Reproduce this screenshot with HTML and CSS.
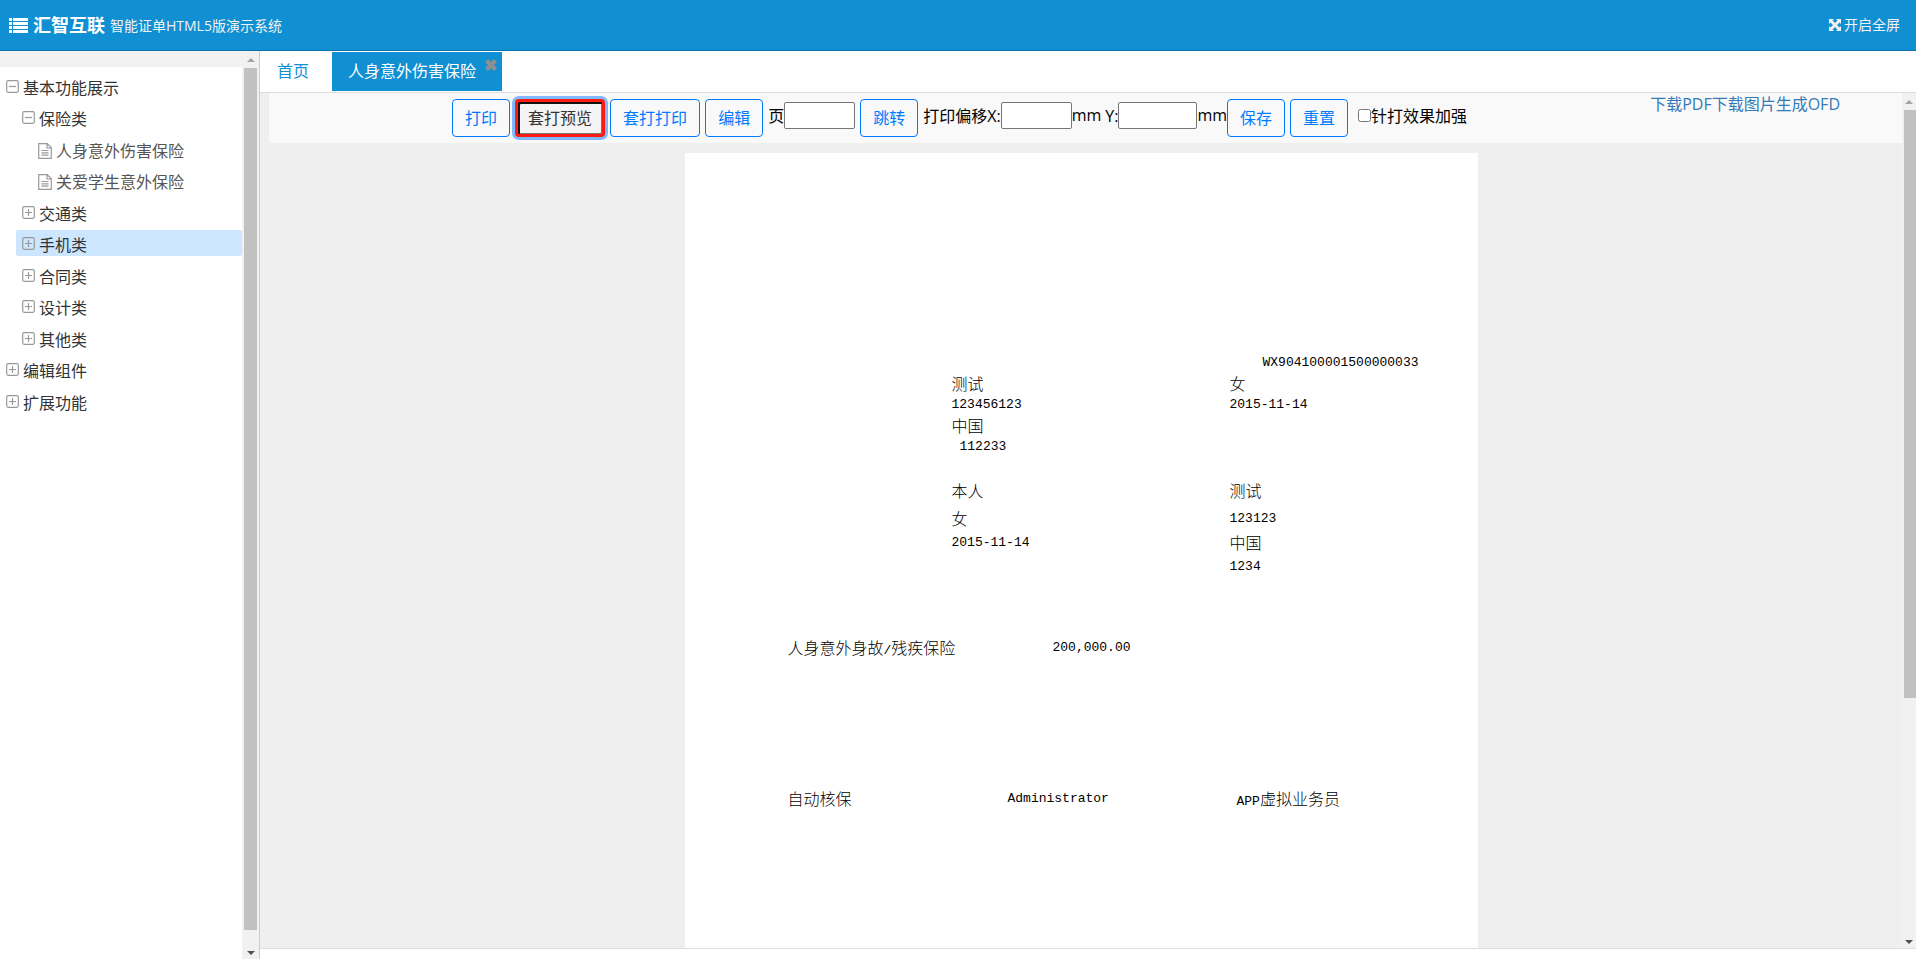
FILE: index.html
```html
<!DOCTYPE html>
<html lang="zh-CN">
<head>
<meta charset="utf-8">
<title>汇智互联 智能证单HTML5版演示系统</title>
<link rel="stylesheet" href="styles.css">
</head>
<body>
<svg class="defs" aria-hidden="true">
  <symbol id="minus" viewBox="0 0 13 13"><rect x=".7" y=".7" width="11.6" height="11.6" rx="1.5" fill="none" stroke="#999" stroke-width="1.2"/><path d="M3 6.5h7" stroke="#999" stroke-width="1.2"/></symbol>
  <symbol id="plus" viewBox="0 0 13 13"><rect x=".7" y=".7" width="11.6" height="11.6" rx="1.5" fill="none" stroke="#999" stroke-width="1.2"/><path d="M3 6.5h7M6.5 3v7" stroke="#999" stroke-width="1.2"/></symbol>
  <symbol id="doc" viewBox="0 0 14 16"><path d="M.7.7h8.5l4.1 4.1v10.5H.7zM9 .7V5h4.3M3.5 7.5h7M3.5 9.8h7M3.5 12.1h7" fill="none" stroke="#999" stroke-width="1.2"/></symbol>
</svg>
<header class="header">
  <div class="brand">
    <svg class="brand-icon" viewBox="0 0 19 15" aria-hidden="true"><path d="M0 0h3v3H0zM4 0h15v3H4zM0 4h3v3H0zM4 4h15v3H4zM0 8h3v3H0zM4 8h15v3H4zM0 12h3v3H0zM4 12h15v3H4z" fill="#fff"/></svg>
    <strong class="brand-name">汇智互联</strong>
    <span class="brand-sub">智能证单HTML5版演示系统</span>
  </div>
  <button class="fullscreen" type="button">
    <svg viewBox="0 0 12 12" width="12" height="12" aria-hidden="true"><path d="M0 0h5L3.500 1.500 6 4l2.500-2.500L7 0h5v5l-1.500-1.500L8 6l2.500 2.500L12 7v5H7l1.500-1.500L6 8l-2.500 2.500L5 12H0V7l1.500 1.500L4 6 1.500 3.500 0 5z" fill="#f2f2f2"/></svg>
    开启全屏
  </button>
</header>
<div class="body">
  <aside class="sidebar">
    <nav class="side-content">
      <div class="side-band"></div>
      <ul class="tree">
        <li class="node"><svg class="box"><use href="#minus"/></svg>基本功能展示</li>
        <li class="node level1"><svg class="box"><use href="#minus"/></svg>保险类</li>
        <li class="node level2"><svg class="doc"><use href="#doc"/></svg><a href="#">人身意外伤害保险</a></li>
        <li class="node level2"><svg class="doc"><use href="#doc"/></svg><a href="#">关爱学生意外保险</a></li>
        <li class="node level1"><svg class="box"><use href="#plus"/></svg>交通类</li>
        <li class="node level1 selected"><svg class="box"><use href="#plus"/></svg>手机类</li>
        <li class="node level1"><svg class="box"><use href="#plus"/></svg>合同类</li>
        <li class="node level1"><svg class="box"><use href="#plus"/></svg>设计类</li>
        <li class="node level1"><svg class="box"><use href="#plus"/></svg>其他类</li>
        <li class="node"><svg class="box"><use href="#plus"/></svg>编辑组件</li>
        <li class="node"><svg class="box"><use href="#plus"/></svg>扩展功能</li>
      </ul>
    </nav>
    <div class="scroll side-scroll">
      <span class="arrow up"></span>
      <div class="track"><div class="thumb"></div></div>
      <span class="arrow down"></span>
    </div>
  </aside>
  <main class="main">
    <nav class="tabs">
      <a class="tab" href="#">首页</a>
      <a class="tab active" href="#">人身意外伤害保险</a>
      <button class="tab-close" type="button" aria-label="关闭"><svg viewBox="0 0 12 12" width="12" height="12"><path d="M3 0l3 3 3-3 3 3-3 3 3 3-3 3-3-3-3 3-3-3 3-3-3-3z" fill="#8f8f8f"/></svg></button>
    </nav>
    <div class="workspace">
      <div class="view">
        <div class="toolbar">
          <form class="controls">
            <button class="btn" type="button">打印</button>
            <button class="btn focused" type="button">套打预览</button>
            <button class="btn" type="button">套打打印</button>
            <button class="btn" type="button">编辑</button>
            <label class="field">页<input type="text" class="num"></label>
            <button class="btn" type="button">跳转</button>
            <div class="offset">
              <label class="field">打印偏移X:<input type="text" class="num"></label>
              <span class="unit">mm</span>
              <label class="field second">Y:<input type="text" class="num wide"></label>
              <span class="unit">mm</span>
              <button class="btn" type="button">保存</button>
            </div>
            <button class="btn" type="button">重置</button>
            <label class="field check"><input type="checkbox" class="tick">针打效果加强</label>
          </form>
          <div class="links"><a href="#">下载PDF</a><a href="#">下载图片</a><a href="#">生成OFD</a></div>
        </div>
        <article class="paper">
          <div class="row number"><span class="code">WX904100001500000033</span></div>
          <div class="row person"><span>测试</span><span>女</span></div>
          <div class="row person"><span class="code">123456123</span><span class="code">2015-11-14</span></div>
          <div class="row person"><span>中国</span></div>
          <div class="row person"><span class="code inset">112233</span></div>
          <div class="row person insured"><span>本人</span><span>测试</span></div>
          <div class="row person loose"><span>女</span><span class="code">123123</span></div>
          <div class="row person loose"><span class="code">2015-11-14</span><span>中国</span></div>
          <div class="row person"><span></span><span class="code">1234</span></div>
          <div class="row cover"><span>人身意外身故<span class="code">/</span>残疾保险</span><span class="code">200,000.00</span></div>
          <div class="row staff"><span>自动核保</span><span class="code">Administrator</span><span><span class="code">APP</span>虚拟业务员</span></div>
        </article>
      </div>
      <div class="scroll main-scroll">
        <span class="arrow up"></span>
        <div class="track"><div class="thumb"></div></div>
        <span class="arrow down"></span>
      </div>
    </div>
  </main>
</div>
</body>
</html>
```
FILE: styles.css
```css
* { box-sizing: border-box; }
html, body { height: 100%; }
body {
  margin: 0;
  display: flex;
  flex-direction: column;
  overflow: hidden;
  background: #fff;
  color: #333;
  font: 16px/24px "Open Sans", "Noto Sans CJK SC", sans-serif;
}
button, input { font: inherit; }
a { text-decoration: none; }
.defs { display: none; }

.header {
  display: flex;
  align-items: center;
  justify-content: space-between;
  height: 51px;
  flex: none;
  padding: 0 16px 0 9px;
  background: #108fd2;
  border-bottom: 1px solid #0b74ad;
}
.brand { display: flex; align-items: center; color: #fff; }
.brand-icon { width: 19px; height: 15px; margin-right: 5px; }
.brand-name { font-size: 18px; margin-right: 5px; }
.brand-sub { padding-top: 2px; font-size: 14px; color: #f2f2f2; }
.fullscreen {
  display: flex;
  align-items: center;
  gap: 3px;
  padding: 0;
  border: 0;
  background: none;
  color: #f2f2f2;
  font-size: 14px;
}

.body { display: flex; flex: 1; min-height: 0; }
.sidebar { display: flex; width: 260px; flex: none; border-right: 1px solid #ccc; }
.side-content { flex: 1; }
.side-band { height: 16px; background: #f2f2f2; }
.tree {
  display: grid;
  grid-auto-rows: 31px 32px;
  align-items: start;
  margin: 0;
  padding: 6px 0 0;
  list-style: none;
}
.node {
  display: flex;
  align-items: center;
  gap: 4px;
  height: 26px;
  padding: 3px 0 0 6px;
}
.node a { color: #555; }
.level1 { margin-left: 16px; }
.level2 { margin-left: 32px; }
.selected { background: #cce6ff; border-radius: 2px; }
.box { width: 13px; height: 13px; margin-bottom: 2px; }
.doc { width: 14px; height: 16px; }

.scroll {
  display: flex;
  flex-direction: column;
  flex: none;
  align-items: center;
  background: #f1f1f1;
}
.track { flex: 1; width: 100%; padding: 0 2px; }
.thumb { background: #c1c1c1; }
.arrow { border: 4px solid transparent; border-top-width: 0; border-bottom-width: 4px; }
.up { border-bottom-color: #a3a3a3; margin: 7px 0 6px; }
.down { border-bottom-width: 0; border-top: 4px solid #505050; margin: 6px 0 4px; }
.side-scroll { width: 17px; }
.side-scroll .thumb { height: calc(100% - 15px); }
.main-scroll { width: 14px; }
.main-scroll .track { padding-right: 0; }
.main-scroll .thumb { height: calc(72% - 5px); }

.main { display: flex; flex-direction: column; flex: 1; min-width: 0; padding-bottom: 10px; }
.tabs { display: flex; height: 42px; flex: none; padding-top: 1px; border-bottom: 1px solid #ddd; }
.tab { height: 39px; line-height: 38px; padding: 0 23px 0 17px; color: #108fd2; }
.active { background: #108fd2; color: #fff; padding: 0 26px 0 16px; }
.tab-close {
  width: 12px;
  height: 12px;
  margin: 7px 0 0 -17px;
  padding: 0;
  border: 0;
  background: none;
  line-height: 0;
}

.workspace { display: flex; flex: 1; min-height: 0; border-bottom: 1px solid #ddd; }
.view { flex: 1; min-width: 0; overflow: hidden; background: #efefef; }
.toolbar { display: flex; height: 50px; margin-left: 9px; padding-right: 62px; background: #f9f9f9; }
.controls { display: flex; flex: 1; align-items: flex-start; justify-content: center; gap: 5px; padding-top: 6px; color: #000; white-space: nowrap; }
.btn {
  height: 38px;
  padding: 0 12px;
  border: 1px solid #007bff;
  border-radius: 4px;
  background: transparent;
  color: #007bff;
  white-space: nowrap;
}
.focused {
  padding: 0 10px;
  border: 3px solid #ff1a10;
  background: #f4f4f4;
  color: #333;
  box-shadow: inset 2px 2px 0 #111, inset -1px -1px 0 #777, 0 0 0 3px #80b8ff;
}
.field { display: flex; align-items: center; height: 33px; }
.offset { display: flex; align-items: flex-start; }
.unit { line-height: 33px; }
.second { margin-left: 4px; }
.num { width: 71px; height: 27px; padding: 1px 2px; border: 1px solid #767676; border-radius: 2px; background: #fff; }
.wide { width: 79px; }
.check { margin-left: 5px; }
.tick { width: 13px; height: 13px; margin: 0; }
.links { line-height: 22px; white-space: nowrap; }
.links a { color: #337ab7; }

.paper {
  width: 793px;
  height: 1122px;
  margin: 10px auto 0;
  padding: 199px 0 0 103px;
  background: #fff;
  color: #000;
  font: 300 16px/21px "Noto Sans CJK SC", sans-serif;
}
.code { font-family: "Liberation Mono", monospace; font-size: 13px; }
.row { display: grid; height: 21px; }
.number { padding-left: 475px; }
.person { grid-template-columns: 278px 1fr; padding-left: 164px; }
.inset { padding-left: 8px; }
.insured { margin: 23px 0 7px; }
.loose { margin-bottom: 3px; }
.cover { grid-template-columns: 265px 1fr; margin-top: 60px; }
.staff { grid-template-columns: 220px 229px 1fr; margin-top: 130px; }
```
